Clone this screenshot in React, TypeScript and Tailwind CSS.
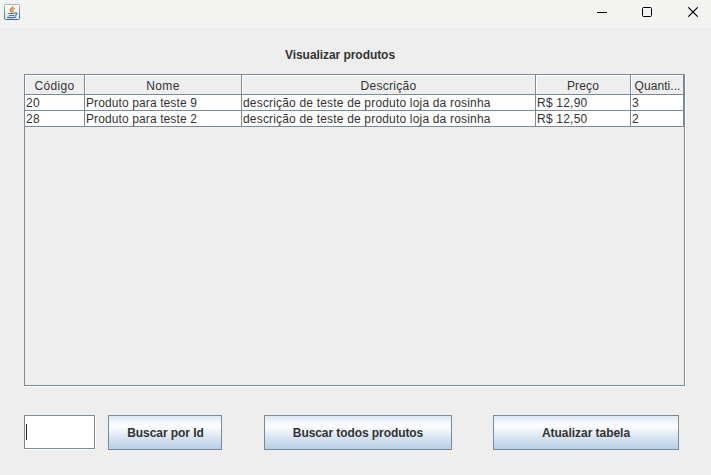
import React from "react";

const rows = [
  ["20", "Produto para teste 9", "descrição de teste de produto loja da rosinha", "R$ 12,90", "3"],
  ["28", "Produto para teste 2", "descrição de teste de produto loja da rosinha", "R$ 12,50", "2"],
];

const columns = [
  { name: "Código", track: "tracking-[0.35px]" },
  { name: "Nome", track: "tracking-[0.4px]" },
  { name: "Descrição", track: "tracking-[0.3px]" },
  { name: "Preço", track: "tracking-[0.15px]" },
  { name: "Quanti...", track: "tracking-[0.05px] pl-px" },
];

const cellTrack = [
  "tracking-[0.3px]",
  "tracking-[0.11px]",
  "pl-[1.5px] tracking-[0.18px]",
  "tracking-[0.22px]",
  "tracking-normal",
];

const gridCols = "grid grid-cols-[60px_157px_294px_95px_53px]";

function JavaIcon() {
  return (
    <svg className="h-4 w-4" viewBox="0 0 16 16" fill="none">
      <defs>
        <linearGradient id="frame" x1="0" y1="0" x2="0" y2="1">
          <stop offset="0" stopColor="#a3b6c4" />
          <stop offset="1" stopColor="#3f6e90" />
        </linearGradient>
        <linearGradient id="face" x1="0" y1="0" x2="0" y2="1">
          <stop offset="0" stopColor="#ffffff" />
          <stop offset="1" stopColor="#dfe5ea" />
        </linearGradient>
      </defs>
      <rect x="0.5" y="0.5" width="15" height="15" rx="1" fill="url(#face)" stroke="url(#frame)" />
      <path d="M9 2.4C9.2 4 6 4.8 6.5 6.4C6.7 7.1 7.6 7.4 7.6 8.4" stroke="#e8761c" strokeWidth="1.6" />
      <path d="M10.8 4.4C8.8 5.2 8.3 5.9 9 6.8C9.3 7.3 9.1 7.9 8.5 8.4" stroke="#ec8128" strokeWidth="1.3" />
      <path d="M4.2 9.5H10.6M5 11.5H10.2" stroke="#4a7796" strokeWidth="1.2" />
      <path d="M10.8 8.9C13.8 8.3 13.4 10.9 10.8 11.3" stroke="#4a7796" strokeWidth="1.2" />
      <path d="M3.2 13.1C5 13.8 10.4 13.8 12.2 12.9" stroke="#4a7796" strokeWidth="1.2" />
    </svg>
  );
}

function TitleBar() {
  return (
    <header className="flex h-7 items-start justify-between bg-[#f3f3f1] pt-1 pl-1">
      <JavaIcon />
      <svg className="mt-[3px] mr-[12px] h-[10px] w-[102px]" viewBox="0 0 102 10" fill="none" stroke="#000">
        <path d="M0 5.5H10" />
        <rect x="45.5" y="0.5" width="9" height="9" rx="1" />
        <path d="M91.3 0.3L100.7 9.7M100.7 0.3L91.3 9.7" strokeWidth="1.1" />
      </svg>
    </header>
  );
}

function MetalButton({ label, className }: { label: string; className: string }) {
  return (
    <button
      className={
        "h-[35px] border border-[#7a8a99] bg-[linear-gradient(to_bottom,#dde8f3_0%,#ffffff_30%,#dde8f3_60%,#b8cfe5_100%)] text-center text-[12px] font-bold whitespace-nowrap " +
        className
      }
    >
      {label}
    </button>
  );
}

export default function App() {
  return (
    <div className="flex h-[475px] w-[711px] flex-col overflow-hidden bg-[#eeeeee] font-['Liberation_Sans',Arial,sans-serif] text-[12px] text-[#333333]">
      <TitleBar />
      <h1 className="mt-[19px] ml-[285px] h-[16px] text-[12px] leading-[16px] font-bold tracking-[-0.06px] whitespace-nowrap">
        Visualizar produtos
      </h1>
      <main className="mt-[11px] ml-[24px] h-[313px] w-[662px] border-r border-b border-white">
        <div className="h-[312px] w-[661px] border border-[#7a8a99]">
          <div className={gridCols}>
            {columns.map(({ name, track }) => (
              <div
                key={name}
                className={
                  "h-[20px] border-r border-b border-[#7a8a99] text-center leading-[22px] whitespace-nowrap shadow-[inset_1px_1px_0_#ffffff] " +
                  track
                }
              >
                {name}
              </div>
            ))}
          </div>
          {rows.map((row) => (
            <div key={row[0]} className={gridCols}>
              {row.map((cell, i) => (
                <div
                  key={i}
                  className={
                    "h-[16px] overflow-hidden border-r border-b border-[#7a8a99] bg-white pl-px leading-[16px] whitespace-nowrap " +
                    cellTrack[i]
                  }
                >
                  {cell}
                </div>
              ))}
            </div>
          ))}
        </div>
      </main>
      <footer className="mt-[28px] ml-[24px] flex items-start">
        <div className="h-[35px] w-[72px] border-r border-b border-white">
          <div className="h-[34px] w-[71px] border border-[#7a8a99] bg-white pt-[8px] pl-px">
            <div className="h-[16px] w-px bg-[#222222]" />
          </div>
        </div>
        <MetalButton label="Buscar por Id" className="ml-[12px] w-[114px] pl-px tracking-[-0.06px]" />
        <MetalButton label="Buscar todos produtos" className="ml-[42px] w-[188px] tracking-[-0.08px]" />
        <MetalButton label="Atualizar tabela" className="ml-[41px] w-[186px] tracking-[-0.04px]" />
      </footer>
    </div>
  );
}
